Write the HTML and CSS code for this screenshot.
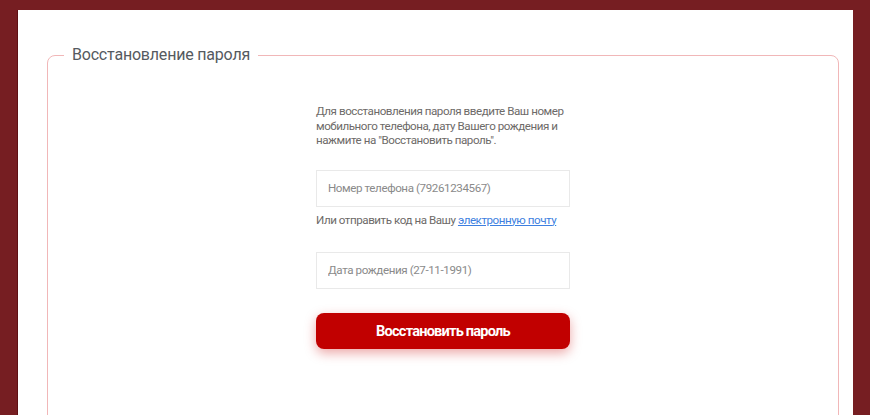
FILE: index.html
```html
<!DOCTYPE html>
<html lang="ru">
<head>
<meta charset="utf-8">
<title>Восстановление пароля</title>
<link rel="stylesheet" href="styles.css">
</head>
<body>
<div class="panel">
  <fieldset class="box">
    <legend class="box-title">Восстановление пароля</legend>
    <div class="form">
      <p class="intro">Для восстановления пароля введите Ваш номер<br>мобильного телефона, дату Вашего рождения и<br>нажмите на "Восстановить пароль".</p>
      <input class="field" type="text" placeholder="Номер телефона (79261234567)">
      <p class="alt">Или отправить код на Вашу <a href="#" class="alt-link">электронную почту</a></p>
      <input class="field field-date" type="text" placeholder="Дата рождения (27-11-1991)">
      <button class="submit" type="button">Восстановить пароль</button>
    </div>
  </fieldset>
</div>
</body>
</html>
```
FILE: styles.css
```css
html, body {
  margin: 0;
  padding: 0;
  height: 100%;
}
body {
  background: #761e22;
  font-family: "Roboto", sans-serif;
  overflow: hidden;
}
.panel {
  margin: 10px 0 0 18px;
  width: 835px;
  height: 405px;
  background: #fff;
  box-shadow: -1px 0 0 #5e1014;
  padding: 34px 14px 0 29px;
  box-sizing: border-box;
}
.box {
  margin: 0;
  border: 1px solid #f1b7b8;
  border-radius: 8px;
  padding: 0;
  height: 400px;
  min-width: 0;
}
.box-title {
  margin-left: 16px;
  padding: 0 8px;
  font-family: "Roboto", sans-serif;
  font-size: 16px;
  letter-spacing: -0.2px;
  color: #555a60;
  line-height: 22px;
}
.form {
  width: 254px;
  margin: 38px auto 0;
  display: flex;
  flex-direction: column;
}
.intro {
  margin: 0 0 0 0;
  font-size: 11.6px;
  letter-spacing: -0.45px;
  line-height: 14.5px;
  color: #6d6a68;
  white-space: nowrap;
}
.field {
  margin-top: 22px;
  height: 37px;
  box-sizing: border-box;
  border: 1px solid #e9e9e9;
  padding: 0 11px;
  font-family: inherit;
  font-size: 11.6px;
  letter-spacing: -0.4px;
  outline: none;
}
.field::placeholder {
  color: #8a8a8a;
}
.field-date {
  margin-top: 24px;
}
.alt {
  margin: 6px 0 0;
  font-size: 11.6px;
  letter-spacing: -0.45px;
  line-height: 15px;
  color: #6d6a68;
  white-space: nowrap;
}
.alt-link {
  color: #3d7fe0;
  text-decoration: underline;
}
.submit {
  margin-top: 24px;
  height: 36px;
  border: none;
  border-radius: 8px;
  background: #c10000;
  color: #fff;
  font-family: inherit;
  font-weight: bold;
  font-size: 14.6px;
  letter-spacing: -0.8px;
  box-shadow: 0 4px 12px rgba(200, 0, 0, 0.35);
  cursor: pointer;
}
```
